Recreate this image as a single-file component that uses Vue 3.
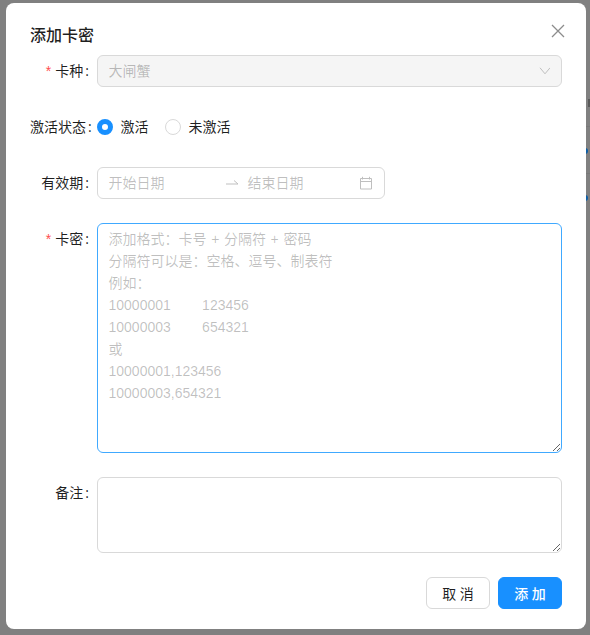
<script setup>
const placeholder = '添加格式：卡号 + 分隔符 + 密码\n分隔符可以是：空格、逗号、制表符\n例如：\n10000001\t123456\n10000003\t654321\n或\n10000001,123456\n10000003,654321'
</script>

<template>
  <div class="page">
    <i class="behind-mark"></i>
    <i class="behind-line l1"></i>
    <i class="behind-line l2"></i>
    <i class="behind-dot d1"></i>
    <i class="behind-dot d2"></i>
    <div class="modal">
      <button class="close" type="button" aria-label="关闭">
        <svg width="14" height="14" viewBox="0 0 14 14"><path d="M1 1L13 13M13 1L1 13" fill="none" stroke="#8c8c8c" stroke-width="1.3" /></svg>
      </button>
      <div class="title">添加卡密</div>
      <form class="form" @submit.prevent>
        <div class="row">
          <label class="label"><span class="req">*</span>卡种<span class="colon">:</span></label>
          <div class="select">
            <span>大闸蟹</span>
            <svg width="12" height="12" viewBox="0 0 12 12" class="chev"><path d="M2 2.8L7 8.8L12 2.8" fill="none" stroke="#bfbfbf" stroke-width="1" /></svg>
          </div>
        </div>
        <div class="row">
          <label class="label">激活状态<span class="colon">:</span></label>
          <div class="radios">
            <span class="radio"><i class="dot on"></i>激活</span>
            <span class="radio"><i class="dot"></i>未激活</span>
          </div>
        </div>
        <div class="row">
          <label class="label">有效期<span class="colon">:</span></label>
          <div class="range">
            <span class="date">开始日期</span>
            <svg class="arrow" width="14" height="8" viewBox="0 0 14 8"><path d="M1 5H13L9 1.5" fill="none" stroke="#bfbfbf" stroke-width="1" /></svg>
            <span class="date end">结束日期</span>
            <svg width="14" height="14" viewBox="0 0 14 14"><path d="M1.5 2.5H12.5V13H1.5ZM1.5 5.5H12.5M3.5 0.8V3.5M10.5 0.8V3.5" fill="none" stroke="#bfbfbf" stroke-width="1" /></svg>
          </div>
        </div>
        <div class="row">
          <label class="label"><span class="req">*</span>卡密<span class="colon">:</span></label>
          <textarea class="area focus" :placeholder="placeholder"></textarea>
        </div>
        <div class="row">
          <label class="label">备注<span class="colon">:</span></label>
          <textarea class="area small"></textarea>
        </div>
      </form>
      <div class="footer">
        <button class="btn" type="button">取 消</button>
        <button class="btn primary" type="button">添 加</button>
      </div>
    </div>
  </div>
</template>

<style>
html, body { margin: 0; background: #808080; }
</style>

<style scoped>
.page {
  position: relative;
  width: 590px;
  height: 635px;
  box-sizing: border-box;
  padding: 3px 4px 6px 6px;
  background: #808080;
  overflow: hidden;
  font-family: "Open Sans", "Noto Sans CJK SC", sans-serif;
  font-size: 14px;
  color: rgba(0, 0, 0, 0.88);
}
.behind-mark {
  position: absolute;
  left: 588px;
  top: 99px;
  width: 2px;
  height: 8px;
  background: #5a5a5a;
}
.behind-line {
  position: absolute;
  left: 586px;
  width: 4px;
  height: 1px;
  background: #787878;
}
.l1 { top: 126px; }
.l2 { top: 173px; }
.behind-dot {
  position: absolute;
  left: 582px;
  width: 6px;
  height: 6px;
  border-radius: 50%;
  background: #0c5da5;
}
.d1 { top: 148px; }
.d2 { top: 195px; }
.modal {
  position: relative;
  height: 626px;
  box-sizing: border-box;
  padding: 21px 24px 20px;
  background: #fff;
  border-radius: 8px;
}
.close {
  position: absolute;
  top: 21px;
  right: 21px;
  padding: 0;
  width: 14px;
  height: 14px;
  border: 0;
  background: none;
  display: flex;
}
.title {
  font-size: 16px;
  font-weight: 500;
  line-height: 22px;
  height: 31px;
  color: rgba(0, 0, 0, 0.88);
}
.form { display: flex; flex-direction: column; gap: 24px; }
.row { display: grid; grid-template-columns: 66.5px 1fr; align-items: start; }
.label {
  height: 32px;
  line-height: 32px;
  text-align: right;
  padding-right: 7.5px;
  white-space: nowrap;
}
.colon { margin-left: 2px; }
.req {
  color: #ff4d4f;
  margin-right: 4px;
  font-family: "Liberation Sans", sans-serif;
}
.select {
  height: 32px;
  line-height: 30px;
  box-sizing: border-box;
  padding: 0 11px;
  border: 1px solid #d9d9d9;
  border-radius: 6px;
  background: #f5f5f5;
  color: rgba(0, 0, 0, 0.25);
  display: flex;
  align-items: center;
  justify-content: space-between;
}
.radios { height: 32px; line-height: 32px; display: flex; align-items: center; gap: 16px; }
.radio { display: flex; align-items: center; gap: 8px; }
.dot {
  width: 16px;
  height: 16px;
  box-sizing: border-box;
  border-radius: 50%;
  border: 1px solid #d9d9d9;
  background: #fff;
}
.dot.on { border: 5px solid #1890ff; }
.range {
  width: 288px;
  height: 32px;
  line-height: 30px;
  box-sizing: border-box;
  padding: 0 11px;
  border: 1px solid #d9d9d9;
  border-radius: 6px;
  display: flex;
  align-items: center;
  color: rgba(0, 0, 0, 0.25);
}
.date { width: 116px; }
.date.end { width: 111px; margin-left: 9px; }
.area {
  display: block;
  width: 100%;
  height: 230px;
  box-sizing: border-box;
  padding: 4px 11px;
  border: 1px solid #d9d9d9;
  border-radius: 6px;
  font: inherit;
  font-family: "Liberation Sans", "Noto Sans CJK SC", sans-serif;
  line-height: 22px;
  word-spacing: 0.75px;
  tab-size: 31.2px;
  color: inherit;
  outline: none;
  resize: vertical;
}
.area::placeholder { color: rgba(0, 0, 0, 0.25); opacity: 1; }
.area.focus { border-color: #40a9ff; }
.area.small { height: 76px; }
.footer { display: flex; justify-content: flex-end; gap: 8px; margin-top: 24px; }
.btn {
  width: 64px;
  height: 32px;
  line-height: 30px;
  padding: 0;
  border: 1px solid #d9d9d9;
  border-radius: 6px;
  background: #fff;
  font: inherit;
  color: rgba(0, 0, 0, 0.88);
}
.btn.primary {
  border-color: #1890ff;
  background: #1890ff;
  color: #fff;
  font-weight: 500;
}
</style>
